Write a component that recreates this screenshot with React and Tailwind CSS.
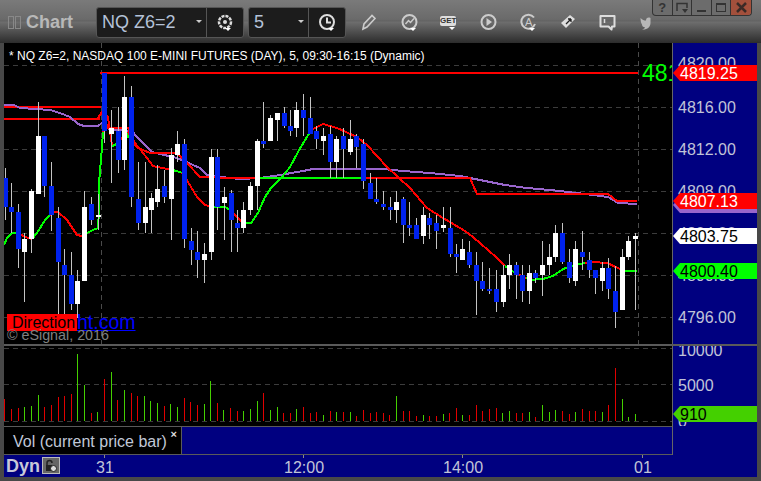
const ARIAL = "font-['Liberation_Sans',Arial,sans-serif]";

// x, wick top, wick bottom, body top, body bottom, colour (b = blue, w = white)
const candles = [
  [5,168,220,178,207,"b"],[11,183,233,207,212,"b"],[18,204,268,212,249,"b"],[24,233,302,239,252,"w"],
  [31,189,253,191,239,"w"],[38,102,194,136,194,"w"],[44,136,197,136,186,"b"],[51,162,231,186,215,"b"],
  [58,207,315,218,262,"b"],[64,249,317,265,275,"b"],[71,252,310,275,304,"b"],[77,270,318,281,304,"w"],
  [84,191,281,207,281,"w"],[91,197,225,204,220,"b"],[98,194,230,215,217,"w"],[104,73,143,73,131,"b"],
  [111,110,183,128,134,"w"],[118,107,173,131,160,"b"],[124,76,170,97,160,"w"],[131,86,207,97,197,"b"],
  [138,162,230,199,223,"b"],[145,162,233,207,223,"w"],[151,193,233,198,210,"w"],[157,165,207,189,202,"w"],
  [164,170,203,186,197,"b"],[171,148,240,155,199,"w"],[177,131,162,144,155,"w"],[184,139,248,144,239,"b"],
  [191,228,265,241,250,"b"],[197,231,278,252,260,"b"],[204,243,283,254,260,"w"],[211,149,260,157,252,"w"],
  [217,149,230,157,207,"b"],[224,187,240,197,203,"w"],[231,190,252,193,220,"b"],[237,210,252,223,228,"b"],
  [243,202,233,210,228,"w"],[250,182,215,186,210,"w"],[257,139,210,141,186,"w"],[263,102,148,141,144,"b"],
  [270,115,141,118,141,"w"],[277,113,141,113,120,"w"],[284,107,128,113,126,"b"],[290,110,136,126,131,"b"],
  [296,102,137,110,128,"w"],[303,94,136,110,118,"b"],[310,97,134,118,134,"b"],[316,126,149,131,139,"b"],
  [323,128,155,136,141,"w"],[330,126,178,134,162,"b"],[336,136,178,139,162,"w"],[343,128,178,136,149,"b"],
  [350,120,155,139,152,"w"],[356,134,168,136,147,"b"],[363,139,189,144,181,"b"],[370,173,199,183,199,"b"],
  [376,178,204,199,202,"b"],[383,191,210,204,207,"b"],[390,197,220,207,210,"b"],[396,191,223,202,210,"w"],
  [403,197,243,199,225,"b"],[409,202,236,225,228,"b"],[416,218,239,225,239,"b"],[423,207,244,215,236,"w"],
  [429,213,239,218,225,"b"],[436,215,249,223,231,"b"],[443,207,232,225,228,"w"],[450,207,257,228,254,"b"],
  [456,244,273,254,257,"b"],[462,239,260,249,260,"w"],[469,241,268,252,265,"b"],[476,252,315,265,281,"b"],
  [482,262,291,281,289,"b"],[489,268,294,289,291,"b"],[496,270,312,289,302,"b"],[503,265,307,275,302,"w"],
  [509,254,289,265,275,"w"],[516,262,299,265,275,"b"],[522,265,302,275,291,"b"],[529,265,304,273,291,"w"],
  [535,270,283,273,278,"b"],[542,241,296,265,275,"w"],[549,244,275,257,265,"w"],[555,225,262,233,257,"w"],
  [562,223,264,233,262,"b"],[569,249,283,262,278,"b"],[575,241,286,249,281,"w"],[582,231,270,252,257,"b"],
  [589,252,278,260,270,"b"],[595,270,294,270,278,"b"],[602,262,291,268,281,"w"],[608,258,299,268,289,"b"],
  [615,266,328,291,312,"b"],[622,249,310,257,310,"w"],[628,236,260,241,257,"w"],[635,233,310,236,239,"w"],
];

const purple = "4,105 14,105 20,108 35,109 50,110 60,113 70,117 78,124 84,126 98,126 103,122 110,130 133,131 135,135 152,152 177,158 200,168 207,175 230,178 240,179 260,178 280,175 303,171 313,169 383,169 403,171 430,173 460,176 480,180 505,185 527,188 560,191 593,195 608,197 618,203 637,204";
const slowRed = [
  "98,118 102,112 108,128 128,128 135,145 138,148 150,153 177,153 187,163 200,177 230,178 260,178",
  "362,178 470,178 477,194 608,194 617,201 637,201",
];
const fastLine = [
  ["#00ff00","4,245 7,238 12,233 18,233"],["#ff0000","18,233 25,237 32,239"],["#00ff00","32,239 37,233 45,220 50,215"],
  ["#ff0000","50,215 55,212 58,212 67,220 77,235 82,236"],["#00ff00","82,236 87,233 93,230 98,228 99,210 99,183 102,147 103,132"],
  ["#ff0000","103,132 103,113 108,117 112,145"],["#00ff00","112,146 115,145 118,142"],["#ff0000","118,142 122,138"],["#00ff00","122,138 128,137 128,132"],
  ["#ff0000","128,132 135,143 147,158 153,166 167,169 172,170"],["#00ff00","172,170 177,171 182,173"],
  ["#ff0000","182,173 188,182 197,197 205,205 213,207"],["#00ff00","213,207 225,207 230,210"],
  ["#ff0000","230,210 233,213 242,222 245,223"],["#00ff00","245,223 251,223 258,213 265,197 271,188 282,177 290,167 298,152 308,135 313,129"],
  ["#ff0000","313,129 323,124 337,128 357,137 367,145 387,167 410,188 427,208 443,218 460,228 468,233 480,243 497,258 505,266"],
  ["#00ff00","505,266 510,270 516,273"],["#ff0000","516,273 520,275 526,278"],
  ["#00ff00","526,278 530,280 543,279 553,276 563,269 575,265 585,263"],["#ff0000","585,263 592,262 607,263 618,268 622,270"],
  ["#00ff00","622,270 625,271 637,271"],
];

// x, top y, g = green, r = red
const volumes = [
  [4,399,"r"],[11,409,"r"],[18,408,"r"],[24,407,"g"],[31,406,"g"],[38,395,"g"],[44,407,"r"],[51,405,"r"],[58,397,"r"],[64,396,"r"],
  [71,394,"r"],[77,354,"g"],[84,385,"g"],[91,413,"r"],[97,412,"g"],[104,379,"r"],[111,372,"g"],[117,400,"r"],[124,390,"g"],[131,393,"r"],
  [137,396,"r"],[144,396,"g"],[150,401,"g"],[157,403,"g"],[164,406,"r"],[170,404,"g"],[177,407,"g"],[184,398,"r"],[190,402,"r"],[197,405,"r"],
  [204,404,"g"],[210,381,"g"],[217,403,"r"],[223,410,"g"],[230,408,"r"],[237,411,"r"],[243,411,"g"],[250,409,"g"],[257,401,"g"],[263,393,"r"],
  [270,410,"g"],[277,407,"g"],[283,413,"r"],[290,413,"r"],[296,409,"g"],[303,407,"r"],[310,413,"r"],[316,412,"r"],[323,415,"g"],[330,411,"r"],
  [336,412,"g"],[343,412,"r"],[350,412,"g"],[356,416,"r"],[363,410,"r"],[370,413,"r"],[376,412,"r"],[383,413,"r"],[389,415,"r"],[396,396,"g"],
  [403,411,"r"],[409,411,"r"],[416,416,"r"],[423,415,"g"],[429,416,"r"],[436,416,"r"],[443,414,"g"],[449,413,"r"],[456,408,"r"],[462,415,"g"],
  [469,415,"r"],[476,405,"r"],[482,411,"r"],[489,409,"r"],[496,408,"r"],[502,413,"g"],[509,411,"g"],[516,413,"r"],[522,413,"r"],[529,412,"g"],
  [535,417,"r"],[542,405,"g"],[549,412,"g"],[555,410,"g"],[562,411,"r"],[569,414,"r"],[575,412,"g"],[582,409,"r"],[589,411,"r"],[595,411,"r"],
  [602,412,"g"],[608,405,"r"],[615,368,"r"],[622,399,"g"],[628,417,"g"],[635,414,"g"],
];

const priceGrid = [65, 107, 149, 191, 233, 275, 317];
const axisLabels = [["4820.00",64],["4816.00",108],["4812.00",150],["4808.00",192],["4804.00",234],["4800.00",276],["4796.00",318]];
const timeLabels = [["31",92,100],["12:00",280,299],["14:00",439,458],["01",630,638]];

function Caret({ x, y }) {
  return <polygon points={`${x},${y} ${x + 6},${y} ${x + 3},${y + 3}`} fill="#fff" />;
}

function ToolIcon({ children, className = "", width = 18 }) {
  return (
    <svg width={width} height="20" viewBox={`0 0 ${width} 20`} className={`shrink-0 ${className}`} fill="none">
      {children}
    </svg>
  );
}

function Tag({ top, bg, color, text }) {
  return (
    <div
      className={`absolute left-0 w-[84px] h-4 [clip-path:polygon(0_50%,7px_0,100%_0,100%_100%,7px_100%)] pl-[7px] text-[16px] leading-[17px] ${bg} ${color}`}
      style={{ top }}
    >
      {text}
    </div>
  );
}

function WinButton({ children, className = "" }) {
  return <div className={`w-5 h-[15px] flex items-center justify-center border-r border-[#333] ${className}`}>{children}</div>;
}

function PriceChart() {
  return (
    <div className="relative w-[668px] h-[301px] bg-black overflow-hidden">
      <svg width="668" height="301" viewBox="4 43 668 301" className="absolute inset-0">
        {priceGrid.map((y) => (
          <line key={y} x1="4" x2="672" y1={y + 0.5} y2={y + 0.5} stroke="#3c3c3c" strokeDasharray="5 4" />
        ))}
        <line x1="101.5" x2="101.5" y1="43" y2="344" stroke="#4a4a4a" strokeDasharray="5 4" />
        <line x1="638.5" x2="638.5" y1="43" y2="344" stroke="#4a4a4a" strokeDasharray="5 4" />
        <g shapeRendering="crispEdges" fill="none" strokeWidth="2">
          <polyline points="4,107 101,107" stroke="#ff0000" />
          <polyline points="4,119 100,119" stroke="#ff0000" />
          <polyline points="100,73 638,73" stroke="#ff0000" />
          <polyline points={purple} stroke="#9966cc" />
          {slowRed.map((p) => <polyline key={p} points={p} stroke="#ff0000" />)}
          <polyline points="260,178 362,178" stroke="#00ff00" />
          {fastLine.map(([c, p]) => <polyline key={p} points={p} stroke={c} />)}
        </g>
        <g shapeRendering="crispEdges">
          {candles.map(([x, hi, lo, top, bottom, kind]) => (
            <g key={x}>
              <rect x={x} y={hi} width="1" height={lo - hi} fill="#c4c4c4" />
              <rect x={x - 2} y={top} width="5" height={bottom - top} fill={kind === "b" ? "#0022ee" : "#ffffff"} />
            </g>
          ))}
        </g>
      </svg>
      <div className="absolute left-[5px] top-[5px] text-[12px] leading-4 text-white whitespace-nowrap">
        * NQ Z6=2, NASDAQ 100 E-MINI FUTURES (DAY), 5, 09:30-16:15 (Dynamic)
      </div>
      <div className="absolute left-[638px] top-[18px] text-[23px] leading-6 text-[#00ff00]">4819</div>
      <div className="absolute left-[3px] top-[270px] flex items-end whitespace-nowrap">
        <div className="w-[70px] h-[17px] bg-[#ff0000] pl-[5px] text-[16px] leading-[17px] text-black">Direction</div>
        <div className="text-[19.5px] leading-[18px] text-[#0000ff] underline">ht.com</div>
      </div>
      <div className="absolute left-[3px] top-[284px] text-[14.3px] leading-4 text-[#808080]">© eSignal, 2016</div>
    </div>
  );
}

function VolumeChart() {
  return (
    <div className="w-[668px] h-[80px] bg-black">
      <svg width="668" height="80" viewBox="4 346 668 80" className="block">
        {[348, 384, 421].map((y) => (
          <line key={y} x1="4" x2="672" y1={y + 0.5} y2={y + 0.5} stroke="#3c3c3c" strokeDasharray="5 4" />
        ))}
        <g shapeRendering="crispEdges">
          {volumes.map(([x, top, c]) => (
            <rect key={x} x={x} y={top} width="1" height={421 - top} fill={c === "g" ? "#44d000" : "#e00000"} />
          ))}
        </g>
      </svg>
    </div>
  );
}

export default function App() {
  return (
    <div className={`relative w-[761px] h-[481px] flex flex-col bg-[#484848] overflow-hidden ${ARIAL}`}>
      {/* title bar */}
      <div className="h-[43px] shrink-0 flex items-center pl-2 pt-[1px] bg-[linear-gradient(#7a7a7a_0%,#6a6a6a_45%,#626262_49%,#6e6e6e_51%,#2c2c2c_100%)]">
        <div className="flex gap-[1px] mr-[5px]">
          <div className="w-[6px] h-[13px] border border-[#888]" />
          <div className="w-[6px] h-[13px] border border-[#888]" />
        </div>
        <span className="text-[18px] font-bold text-[#b8b8b8] mr-[23px]">Chart</span>

        <div className="w-[148px] h-[31px] flex rounded-[3px] border border-[#555] bg-[#1c1c1c]">
          <div className="w-[110px] flex items-center pl-[5px] border-r border-[#555] relative">
            <span className="text-[18px] text-[#b4c2d8] whitespace-nowrap">NQ Z6=2</span>
            <span className="absolute right-[4px] top-[12px] border-x-[3px] border-t-[3px] border-x-transparent border-t-[#ccc]" />
          </div>
          <div className="flex-1 flex items-center justify-center">
            <ToolIcon>
              <circle cx="9" cy="10" r="6" stroke="#ddd" strokeWidth="2.5" strokeDasharray="3 1" />
              <circle cx="9" cy="10" r="2" fill="#ddd" />
              <Caret x={9} y={16} />
            </ToolIcon>
          </div>
        </div>

        <div className="ml-[4px] w-[98px] h-[31px] flex rounded-[3px] border border-[#555] bg-[#1c1c1c]">
          <div className="w-[60px] flex items-center pl-[5px] border-r border-[#555] relative">
            <span className="text-[18px] text-[#b4c2d8]">5</span>
            <span className="absolute right-[4px] top-[12px] border-x-[3px] border-t-[3px] border-x-transparent border-t-[#ccc]" />
          </div>
          <div className="flex-1 flex items-center justify-center">
            <ToolIcon>
              <circle cx="9" cy="10" r="7" stroke="#ddd" strokeWidth="2" />
              <path d="M9 5.5V10.5H13" stroke="#ddd" strokeWidth="2" />
              <Caret x={10} y={16} />
            </ToolIcon>
          </div>
        </div>

        <ToolIcon className="ml-[15px]" width={15}>
          <path d="M2 17L3 12L11 3.5L14 6.5L6 15Z" stroke="#ccc" strokeWidth="1.6" />
        </ToolIcon>
        <ToolIcon className="ml-[25px]">
          <circle cx="8.5" cy="10" r="7" stroke="#ccc" strokeWidth="2" />
          <path d="M4.5 12L7.5 8.5L9.5 10.5L13 6.5" stroke="#ccc" strokeWidth="1.5" />
          <Caret x={9} y={16} />
        </ToolIcon>
        <div className="relative ml-[21px] w-[18px] h-5 shrink-0">
          <div className="absolute left-0 top-[4px] w-[16px] h-[10px] rounded-[2px] bg-[#ddd] text-[8px] leading-[10px] font-bold text-center text-[#333]">GET</div>
          <span className="absolute left-[9px] top-[15px] border-x-[3px] border-t-[3px] border-x-transparent border-t-white" />
        </div>
        <ToolIcon className="ml-[22px]">
          <circle cx="8.5" cy="10" r="7" stroke="#ccc" strokeWidth="2" />
          <path d="M6.5 6L12 10L6.5 14Z" fill="#ccc" />
        </ToolIcon>
        <div className="relative ml-[22px] w-[18px] h-5 shrink-0">
          <svg width="18" height="20" viewBox="0 0 18 20" fill="none" className="absolute inset-0">
            <path d="M14 5.5A7 7 0 1 0 15 12" stroke="#ccc" strokeWidth="2" />
            <Caret x={9} y={16} />
          </svg>
          <span className="absolute left-[5px] top-[4px] text-[11px] leading-3 text-[#ccc]">A</span>
        </div>
        <ToolIcon className="ml-[22px]">
          <path d="M1 11L10 3L15 7L6 16Z" fill="#ddd" />
          <path d="M6 12L11 7M11 7H8M11 7V10" stroke="#222" strokeWidth="1.3" />
        </ToolIcon>
        <ToolIcon className="ml-[21px]">
          <path d="M1.5 4H15.5V14.5H13L12.5 17.5L9.5 14.5H1.5Z" stroke="#ddd" strokeWidth="2" strokeLinejoin="round" />
          <path d="M5.5 7V11" stroke="#ddd" strokeWidth="1.5" />
        </ToolIcon>
        <ToolIcon className="ml-[23px]" width={11}>
          <path d="M0.5 6C2.5 8 4 8.5 6 8.5C6 6 8 5 10.5 6L10.5 11C10.5 15 7 18 2 17.5C4 17 5 16 5 15.5C3 15 2 14 2 12.5C1 11 0.5 9 0.5 6Z" fill="#b8b8b8" />
        </ToolIcon>
      </div>

      {/* window buttons */}
      <div className="absolute top-0 left-[652px] w-[100px] flex border border-t-0 border-[#333] rounded-b-[4px] overflow-hidden bg-[#6c6c6c] text-[#333]">
        <WinButton><span className="text-[13px] font-bold leading-none">?</span></WinButton>
        <WinButton>
          <svg width="12" height="12" viewBox="0 0 12 12" fill="none">
            <path d="M1 9V1.5H11V6" stroke="#333" strokeWidth="1.5" />
            <path d="M6 7H12L9 11Z" fill="#333" />
          </svg>
        </WinButton>
        <WinButton><span className="w-[9px] h-[2px] mt-[6px] bg-[#333]" /></WinButton>
        <WinButton><span className="w-[10px] h-[9px] border border-t-2 border-[#333]" /></WinButton>
        <WinButton className="bg-[#a3503c] border-r-0">
          <svg width="11" height="11" viewBox="0 0 11 11">
            <path d="M1 1L10 10M10 1L1 10" stroke="#3a2a26" strokeWidth="2.5" />
          </svg>
        </WinButton>
      </div>

      {/* chart body */}
      <div className="flex-1 flex flex-col px-1">
        <div className="flex h-[301px]">
          <PriceChart />
          <div className="w-[1px] bg-[#666]" />
          <div className="relative w-[84px] bg-[#000080] overflow-hidden text-[16px] leading-4 text-[#c0c4d8]">
            {axisLabels.map(([label, y]) => (
              <div key={label} className="absolute left-[5px]" style={{ top: y - 43 - 8 }}>{label}</div>
            ))}
            <Tag top={22} bg="bg-[#ff0000]" color="text-white" text="4819.25" />
            <Tag top={154} bg="bg-[#9966cc]" color="text-transparent" text="4807.00" />
            <Tag top={150} bg="bg-[#ff0000]" color="text-white" text="4807.13" />
            <Tag top={185} bg="bg-white" color="text-black" text="4803.75" />
            <Tag top={220} bg="bg-[#00ff00]" color="text-black" text="4800.40" />
          </div>
        </div>

        <div className="h-[2px] bg-[#5a5a5a]" />

        <div className="flex h-[80px]">
          <VolumeChart />
          <div className="w-[1px] bg-[#666]" />
          <div className="relative w-[84px] bg-[#000080] overflow-hidden text-[16px] leading-4 text-[#c0c4d8]">
            <div className="absolute left-[5px] top-[-3px]">10000</div>
            <div className="absolute left-[5px] top-[32px]">5000</div>
            <div className="absolute left-[5px] top-[68px]">0</div>
            <Tag top={60} bg="bg-[#44d000]" color="text-black" text="910" />
          </div>
        </div>

        <div className="flex h-[29px]">
          <div className="w-[668px] flex border-y border-[#5a5a5a]">
            <div className="relative w-[178px] bg-black border-r border-[#5a5a5a] pl-[9px] text-[16px] leading-[29px] text-[#c0c8d8] whitespace-nowrap">
              Vol (current price bar)
              <span className="absolute right-[4px] top-[-7px] text-[11px] font-bold text-[#ddd]">×</span>
            </div>
            <div className="flex-1 bg-[#000080]" />
          </div>
          <div className="w-[1px] bg-[#666]" />
          <div className="w-[84px] bg-[#000080]" />
        </div>

        {/* time axis */}
        <div className="relative h-[22px] mb-1 bg-[#000080] text-[16px] text-[#c0c4d8]">
          <span className="absolute left-[2px] top-0 text-[18px] leading-[22px] font-bold text-[#c8c8d8]">Dyn</span>
          <div className="absolute left-[38px] top-[2px] w-[18px] h-[17px] bg-[#666] border border-[#bbb] flex items-center justify-center">
            <svg width="14" height="14" viewBox="0 0 14 14" fill="none">
              <path d="M3 7V4A2.5 2.5 0 0 1 8 4" stroke="#222" strokeWidth="1.5" />
              <rect x="2" y="6" width="6" height="6" fill="#222" />
              <circle cx="9.5" cy="9.5" r="3" fill="#ddd" stroke="#222" />
            </svg>
          </div>
          {timeLabels.map(([label, left, tick]) => (
            <div key={label}>
              <span className="absolute top-0 leading-[25px]" style={{ left }}>{label}</span>
              <span className="absolute top-0 w-[1px] h-[3px] bg-[#888]" style={{ left: tick }} />
            </div>
          ))}
        </div>
      </div>
    </div>
  );
}
